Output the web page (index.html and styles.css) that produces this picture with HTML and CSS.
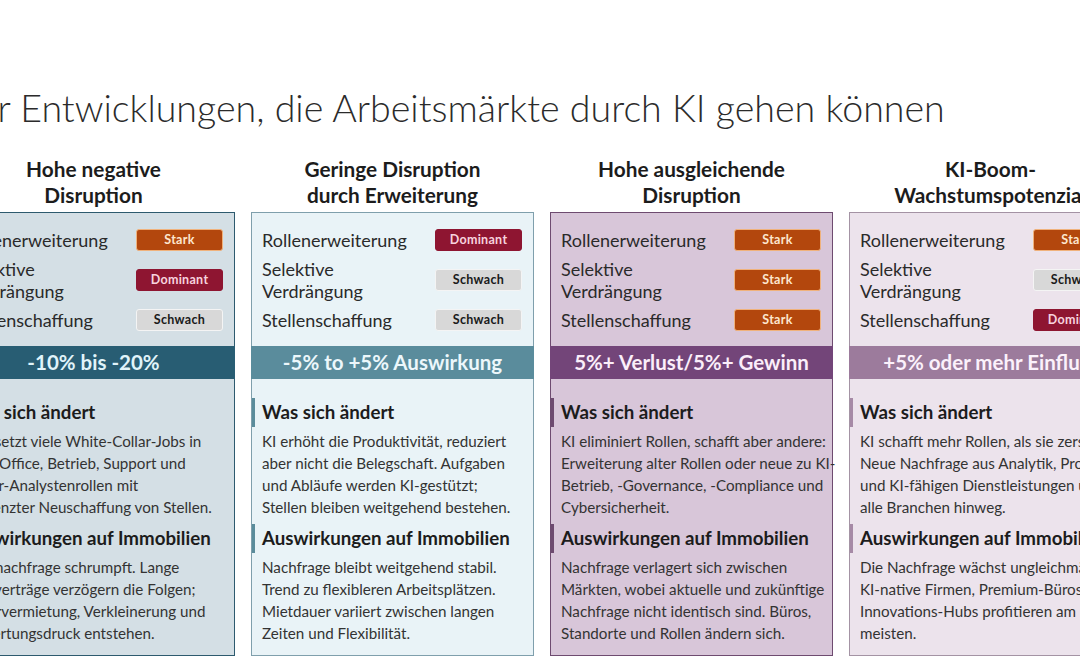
FILE: index.html
```html
<!DOCTYPE html>
<html lang="de">
<head>
<meta charset="utf-8">
<title>Vier Entwicklungen</title>
<link rel="stylesheet" href="styles.css">
</head>
<body>
<div class="page">
  <h1 class="title">Vier Entwicklungen, die Arbeitsmärkte durch KI gehen können</h1>
  <div class="columns">
    <section class="col c1">
      <h2 class="col-title">Hohe negative<br>Disruption</h2>
      <div class="card">
        <div class="rows">
          <div class="row"><span class="label">Rollenerweiterung</span><span class="badge stark">Stark</span></div>
          <div class="row"><span class="label">Selektive<br>Verdrängung</span><span class="badge dominant">Dominant</span></div>
          <div class="row"><span class="label">Stellenschaffung</span><span class="badge schwach">Schwach</span></div>
        </div>
        <div class="band">-10% bis -20%</div>
        <div class="sections">
          <h3 class="sec-title">Was sich ändert</h3>
          <p class="sec-text">KI ersetzt viele White-Collar-Jobs in<br>Back Office, Betrieb, Support und<br>Junior-Analystenrollen mit<br>begrenzter Neuschaffung von Stellen.</p>
          <h3 class="sec-title">Auswirkungen auf Immobilien</h3>
          <p class="sec-text">Büronachfrage schrumpft. Lange<br>Mietverträge verzögern die Folgen;<br>Untervermietung, Verkleinerung und<br>Bewertungsdruck entstehen.</p>
        </div>
      </div>
    </section>
    <section class="col c2">
      <h2 class="col-title">Geringe Disruption<br>durch Erweiterung</h2>
      <div class="card">
        <div class="rows">
          <div class="row"><span class="label">Rollenerweiterung</span><span class="badge dominant">Dominant</span></div>
          <div class="row"><span class="label">Selektive<br>Verdrängung</span><span class="badge schwach">Schwach</span></div>
          <div class="row"><span class="label">Stellenschaffung</span><span class="badge schwach">Schwach</span></div>
        </div>
        <div class="band">-5% to +5% Auswirkung</div>
        <div class="sections">
          <h3 class="sec-title">Was sich ändert</h3>
          <p class="sec-text">KI erhöht die Produktivität, reduziert<br>aber nicht die Belegschaft. Aufgaben<br>und Abläufe werden KI-gestützt;<br>Stellen bleiben weitgehend bestehen.</p>
          <h3 class="sec-title">Auswirkungen auf Immobilien</h3>
          <p class="sec-text">Nachfrage bleibt weitgehend stabil.<br>Trend zu flexibleren Arbeitsplätzen.<br>Mietdauer variiert zwischen langen<br>Zeiten und Flexibilität.</p>
        </div>
      </div>
    </section>
    <section class="col c3">
      <h2 class="col-title">Hohe ausgleichende<br>Disruption</h2>
      <div class="card">
        <div class="rows">
          <div class="row"><span class="label">Rollenerweiterung</span><span class="badge stark">Stark</span></div>
          <div class="row"><span class="label">Selektive<br>Verdrängung</span><span class="badge stark">Stark</span></div>
          <div class="row"><span class="label">Stellenschaffung</span><span class="badge stark">Stark</span></div>
        </div>
        <div class="band">5%+ Verlust/5%+ Gewinn</div>
        <div class="sections">
          <h3 class="sec-title">Was sich ändert</h3>
          <p class="sec-text">KI eliminiert Rollen, schafft aber andere:<br>Erweiterung alter Rollen oder neue zu KI-<br>Betrieb, -Governance, -Compliance und<br>Cybersicherheit.</p>
          <h3 class="sec-title">Auswirkungen auf Immobilien</h3>
          <p class="sec-text">Nachfrage verlagert sich zwischen<br>Märkten, wobei aktuelle und zukünftige<br>Nachfrage nicht identisch sind. Büros,<br>Standorte und Rollen ändern sich.</p>
        </div>
      </div>
    </section>
    <section class="col c4">
      <h2 class="col-title">KI-Boom-<br>Wachstumspotenzial</h2>
      <div class="card">
        <div class="rows">
          <div class="row"><span class="label">Rollenerweiterung</span><span class="badge stark">Stark</span></div>
          <div class="row"><span class="label">Selektive<br>Verdrängung</span><span class="badge schwach">Schwach</span></div>
          <div class="row"><span class="label">Stellenschaffung</span><span class="badge dominant">Dominant</span></div>
        </div>
        <div class="band">+5% oder mehr Einfluss</div>
        <div class="sections">
          <h3 class="sec-title">Was sich ändert</h3>
          <p class="sec-text">KI schafft mehr Rollen, als sie zerstört.<br>Neue Nachfrage aus Analytik, Produktion<br>und KI-fähigen Dienstleistungen über<br>alle Branchen hinweg.</p>
          <h3 class="sec-title">Auswirkungen auf Immobilien</h3>
          <p class="sec-text">Die Nachfrage wächst ungleichmäßig.<br>KI-native Firmen, Premium-Büros und<br>Innovations-Hubs profitieren am<br>meisten.</p>
        </div>
      </div>
    </section>
  </div>
</div>
</body>
</html>
```

FILE: styles.css
```css
html, body {
  margin: 0;
  padding: 0;
  background: #ffffff;
}
body {
  width: 1080px;
  height: 660px;
  overflow: hidden;
  font-family: Lato, "Liberation Sans", sans-serif;
  color: #2a2a2a;
}
.page {
  margin-left: -48px;
  width: 1200px;
}
.title {
  margin: 0;
  padding-top: 84px;
  margin-left: -7px;
  font-size: 37.6px;
  line-height: 48px;
  font-weight: 300;
  color: #2b2b2b;
  white-space: nowrap;
}
.columns {
  display: grid;
  grid-template-columns: repeat(4, 283px);
  column-gap: 16px;
  margin-top: 24px;
}
.col-title {
  margin: 0 0 4px 0;
  height: 52px;
  font-size: 20.8px;
  line-height: 26px;
  font-weight: 700;
  text-align: center;
  color: #1c1c1c;
  white-space: nowrap;
}
.card {
  border: 1px solid;
  height: 444px;
  box-sizing: border-box;
}
.rows {
  padding: 16px 11px 15px 10px;
  display: flex;
  flex-direction: column;
  gap: 7px;
}
.row {
  display: flex;
  align-items: center;
  justify-content: space-between;
}
.label {
  font-size: 18px;
  line-height: 22px;
  color: #2a2a2a;
  white-space: nowrap;
}
.badge {
  width: 87px;
  height: 22px;
  box-sizing: border-box;
  border-radius: 3px;
  font-size: 12.5px;
  letter-spacing: 0.3px;
  font-weight: 700;
  line-height: 20px;
  text-align: center;
  border: 1px solid transparent;
  flex: none;
}
.stark {
  background: #b3470d;
  border-color: #f0b27c;
  color: #fde6cf;
}
.dominant {
  background: #8e1531;
  border-color: #8e1531;
  color: #f7d2de;
}
.schwach {
  background: #d8d8d8;
  border-color: #f4f4f4;
  color: #1a1a1a;
}
.band {
  margin: 0 -1px;
  height: 33px;
  line-height: 33px;
  font-size: 20.5px;
  font-weight: 700;
  text-align: center;
  white-space: nowrap;
}
.sections {
  padding: 19px 0 0 0;
}
.sec-title {
  margin: 0;
  padding-left: 7px;
  border-left: 3px solid;
  font-size: 18.7px;
  line-height: 29px;
  font-weight: 700;
  color: #1c1c1c;
  white-space: nowrap;
}
.sec-text {
  margin: 3px 0 6px 0;
  padding-left: 10px;
  font-size: 15.2px;
  line-height: 22px;
  color: #333333;
  white-space: nowrap;
}
.c1 .card { background: #d4dfe5; border-color: #2d5a6e; }
.c1 .band { background: #285d73; color: #e0f4fa; }
.c1 .sec-title { border-color: #285d73; }
.c2 .card { background: #e9f3f7; border-color: #7f9fac; }
.c2 .band { background: #5a8c9c; color: #ecf7fb; }
.c2 .sec-title { border-color: #5b8c9b; }
.c3 .card { background: #d8c6d9; border-color: #6e4b70; }
.c3 .band { background: #734579; color: #fbeefa; }
.c3 .sec-title { border-color: #6e4b70; }
.c4 .card { background: #ece3ec; border-color: #a493a4; }
.c4 .band { background: #9c7b9c; color: #fbf1fb; }
.c4 .sec-title { border-color: #a68aa6; }
```
